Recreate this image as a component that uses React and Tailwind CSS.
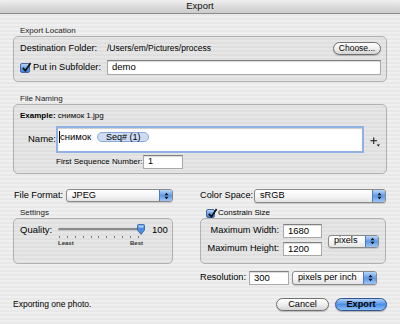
import React from "react";

function Check({ size = 10 }) {
  return (
    <span
      className="relative inline-block shrink-0 rounded-[2px] border border-[#45699f] bg-linear-to-b from-[#b7d4f6] via-[#6ba3ea] to-[#3d7fdb]"
      style={{ width: size, height: size }}
    >
      <svg viewBox="0 0 12 12" className="absolute left-[0px] top-[-2px] w-[11px] h-[11px]">
        <path d="M2 6.5 L4.8 9.5 L10.5 1" fill="none" stroke="#111" strokeWidth="1.9" />
      </svg>
    </span>
  );
}

function Field({ className = "", children }) {
  return (
    <div
      className={`h-[14px] bg-white border border-[#a9a9a9] border-t-[#808080] shadow-[inset_0_1px_1px_rgba(0,0,0,0.15)] flex items-center pl-[4px] ${className}`}
    >
      {children}
    </div>
  );
}

function Popup({ className = "", children }) {
  return (
    <div
      className={`flex rounded-[3px] border border-[#8a8a8a] bg-linear-to-b from-white via-[#f6f6f6] to-[#e3e3e3] shadow-[0_1px_1px_rgba(0,0,0,0.15)] ${className}`}
    >
      <span className="flex-1 pl-[5px] flex items-center">{children}</span>
      <span className="w-[13px] rounded-r-[2px] border-l border-[#4f79b8] bg-linear-to-b from-[#b9d6f8] via-[#5e98e6] to-[#9cc5f5] flex items-center justify-center">
        <svg viewBox="0 0 6 10" className="w-[5px] h-[8px]">
          <path d="M0.5 4 L3 1 L5.5 4 Z M0.5 6 L3 9 L5.5 6 Z" fill="#111" />
        </svg>
      </span>
    </div>
  );
}

function Pill({ className = "", children }) {
  return (
    <div
      className={`h-[13px] rounded-full border border-[#6e6e6e] bg-linear-to-b from-white via-[#efefef] to-[#d4d4d4] flex items-center justify-center shadow-[0_1px_1px_rgba(0,0,0,0.2)] ${className}`}
    >
      {children}
    </div>
  );
}

function GroupLabel({ children }) {
  return <div className="h-[10px] leading-[10px] text-[8px] pl-[7px] text-[#222]">{children}</div>;
}

export default function App() {
  return (
    <div className="w-[400px] h-[324px] overflow-hidden font-['Liberation_Sans',Arial,sans-serif] text-[9.2px] text-black bg-[repeating-linear-gradient(180deg,#efefef_0px,#efefef_2px,#e8e8e8_2px,#e8e8e8_4px)]">
      {/* title bar */}
      <div className="h-[14px] flex items-center justify-center border-b border-[#8c8c8c] bg-linear-to-b from-[#efefef] via-[#dcdcdc] to-[#cbcbcb] text-[9.5px] text-[#111] rounded-t-[4px]">
        Export
      </div>

      <div className="px-[13px]">
        {/* Export Location */}
        <div className="mt-[12px]">
          <GroupLabel>Export Location</GroupLabel>
          <div className="h-[46px] rounded-[5px] border border-[#b0b0b0] bg-black/[0.035] pt-[5px] pl-[6px] pr-[5px]">
            <div className="flex items-center h-[13px]">
              <span className="w-[87px]">Destination Folder:</span>
              <span className="text-[8.5px] flex-1">/Users/em/Pictures/process</span>
              <Pill className="w-[48px] text-[8.5px]">Choose...</Pill>
            </div>
            <div className="flex items-center h-[15px] mt-[5px]">
              <Check />
              <span className="ml-[3px] w-[74px]">Put in Subfolder:</span>
              <Field className="flex-1 h-[15px] text-[9.5px]">demo</Field>
            </div>
          </div>
        </div>

        {/* File Naming */}
        <div className="mt-[12px]">
          <GroupLabel>File Naming</GroupLabel>
          <div className="h-[70px] rounded-[5px] border border-[#b0b0b0] bg-black/[0.035] pt-[6px]">
            <div className="h-[10px] leading-[10px] text-[8px] pl-[6px]">
              <span className="font-bold">Example:</span> снимок 1.jpg
            </div>
            <div className="flex items-center mt-[5px] pl-[14px]">
              <span className="w-[25px] text-[9.5px]">Name:</span>
              <div className="ml-[3px] w-[308px] h-[27px] bg-white border-2 border-[#8fb2e3] shadow-[inset_0_1px_1px_rgba(0,0,0,0.2)] pt-[2px] pl-[1px] flex items-start">
                <span className="w-[1px] h-[12px] bg-black mt-[1px]"></span>
                <span className="text-[9.5px] leading-[14px]">снимок</span>
                <span className="ml-[6px] mt-[2px] h-[10px] w-[52px] rounded-full border border-[#8aa9d8] bg-[#cddcf2] text-[9px] leading-[8px] flex items-center justify-center">
                  Seq# (1)
                </span>
              </div>
              <svg viewBox="0 0 12 12" className="ml-[6px] mt-[4px] w-[10px] h-[10px]">
                <path d="M4.5 0.5 V8.5 M0.5 4.5 H8.5" stroke="#111" strokeWidth="1.2" />
                <path d="M8 9 L12 9 L10 11.5 Z" fill="#111" />
              </svg>
            </div>
            <div className="flex items-center h-[13px] mt-[2px] pl-[42px]">
              <span className="w-[87px] text-[8px]">First Sequence Number:</span>
              <Field className="w-[40px] h-[13px] text-[9px]">1</Field>
            </div>
          </div>
        </div>

        {/* lower two columns */}
        <div className="flex items-start mt-[15px]">
          <div className="w-[160px]">
            <div className="flex items-center h-[13px]">
              <span className="w-[53px] pl-[1px]">File Format:</span>
              <Popup className="w-[107px] h-[13px]">JPEG</Popup>
            </div>
            <div className="mt-[6px]">
              <GroupLabel>Settings</GroupLabel>
              <div className="h-[46px] rounded-[5px] border border-[#b0b0b0] bg-black/[0.035] pt-[5px] pl-[6px] flex items-start">
                <span className="w-[38px] h-[12px] leading-[12px] text-[9.5px]">Quality:</span>
                <div className="relative w-[86px] h-[26px]">
                  <div className="absolute left-0 top-[4px] w-[83px] h-[3px] rounded-full bg-[#8a8a8a] border-b border-[#c8c8c8]"></div>
                  <svg viewBox="0 0 8 11" className="absolute left-[79px] top-0 w-[8px] h-[11px]">
                    <path d="M0.5 1.5 Q0.5 0.5 1.5 0.5 H6.5 Q7.5 0.5 7.5 1.5 V6 L4 10.5 L0.5 6 Z" fill="#4c8ee6" stroke="#2f5f9e" strokeWidth="0.8" />
                    <path d="M1.5 1.5 H6.5 V3.5 H1.5 Z" fill="#cfe2fa" opacity="0.8" />
                  </svg>
                  <div className="absolute left-[1px] top-[12px] w-[80px] flex justify-between">
                    {Array.from({ length: 11 }).map((_, i) => (
                      <span key={i} className="w-[1px] h-[2px] bg-[#777]"></span>
                    ))}
                  </div>
                  <span className="absolute left-0 top-[16px] text-[6px] leading-[7px] font-bold text-[#333]">Least</span>
                  <span className="absolute left-[72px] top-[16px] text-[6px] leading-[7px] font-bold text-[#333]">Best</span>
                </div>
                <span className="ml-[8px] h-[12px] leading-[12px] text-[9.5px]">100</span>
              </div>
            </div>
          </div>

          <div className="ml-[27px] w-[186px]">
            <div className="flex items-center h-[14px]">
              <span className="w-[54px]">Color Space:</span>
              <Popup className="w-[132px] h-[14px]">sRGB</Popup>
            </div>
            <div className="mt-[5px] h-[10px] flex items-center pl-[6px]">
              <Check size={9} />
              <span className="ml-[3px] text-[8px]">Constrain Size</span>
            </div>
            <div className="h-[46px] rounded-[5px] border border-[#b0b0b0] bg-black/[0.035] pt-[5px] flex items-center">
              <div className="flex flex-col gap-[4px] self-start">
                <div className="flex items-center h-[14px]">
                  <span className="w-[79px] text-right pr-[1px]">Maximum Width:</span>
                  <Field className="ml-[3px] w-[39px] text-[9.5px]">1680</Field>
                </div>
                <div className="flex items-center h-[14px]">
                  <span className="w-[79px] text-right pr-[1px]">Maximum Height:</span>
                  <Field className="ml-[3px] w-[39px] text-[9.5px]">1200</Field>
                </div>
              </div>
              <Popup className="ml-[6px] w-[51px] h-[13px] mb-[5px]">pixels</Popup>
            </div>
            <div className="flex items-center h-[14px] mt-[7px]">
              <span className="w-[49px]">Resolution:</span>
              <Field className="w-[40px] text-[9.5px]">300</Field>
              <Popup className="ml-[3px] w-[85px] h-[14px]">pixels per inch</Popup>
            </div>
          </div>
        </div>

        {/* bottom bar */}
        <div className="flex items-center h-[13px] mt-[13px]">
          <span className="flex-1 text-[8.5px]">Exporting one photo.</span>
          <Pill className="w-[53px]">Cancel</Pill>
          <div className="ml-[6px] w-[52px] h-[13px] rounded-full border border-[#2f5490] bg-linear-to-b from-[#b3d3f8] via-[#4b8fe6] to-[#8dc0f6] flex items-center justify-center font-bold shadow-[0_1px_1px_rgba(0,0,0,0.25)]">
            Export
          </div>
        </div>
      </div>
    </div>
  );
}
